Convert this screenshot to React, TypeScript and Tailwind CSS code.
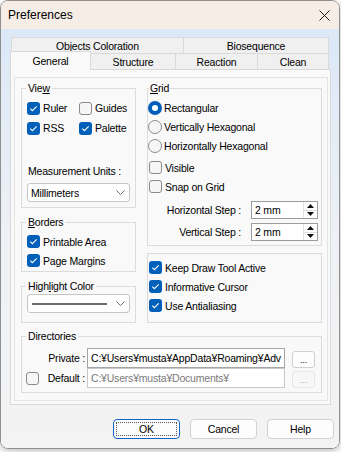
import React from "react";

const Check = ({ checked }: { checked: boolean }) => (
  <svg width="13" height="13" viewBox="0 0 13 13" className="shrink-0">
    {checked ? (
      <>
        <rect x="0" y="0" width="13" height="13" rx="3" fill="#005fb8" />
        <path d="M3.3 6.7 L5.4 8.7 L9.7 4.4" fill="none" stroke="#fff" strokeWidth="1.1" />
      </>
    ) : (
      <rect x="0.5" y="0.5" width="12" height="12" rx="2.5" fill="#f6f6f6" stroke="#8a8a8a" />
    )}
  </svg>
);

const Radio = ({ checked }: { checked: boolean }) => (
  <svg width="14" height="14" viewBox="0 0 14 14" className="shrink-0">
    {checked ? (
      <>
        <circle cx="7" cy="7" r="7" fill="#005fb8" />
        <circle cx="7" cy="7" r="3" fill="#fff" />
      </>
    ) : (
      <circle cx="7" cy="7" r="6.5" fill="#f6f6f6" stroke="#8a8a8a" />
    )}
  </svg>
);

const Chevron = () => (
  <svg width="9" height="5" viewBox="0 0 9 5" className="shrink-0">
    <path d="M0.5 0.5 L4.5 4.5 L8.5 0.5" fill="none" stroke="#6b6b6b" strokeWidth="1" />
  </svg>
);

const CheckRow = ({ checked, children }: { checked: boolean; children: React.ReactNode }) => (
  <div className="flex items-center h-[19px] gap-[3px] whitespace-nowrap">
    <Check checked={checked} />
    <span>{children}</span>
  </div>
);

const RadioRow = ({ checked, children }: { checked: boolean; children: React.ReactNode }) => (
  <div className="flex items-center h-[19px] gap-[2px] whitespace-nowrap">
    <Radio checked={checked} />
    <span>{children}</span>
  </div>
);

const Spinner = ({ value }: { value: string }) => (
  <div className="w-[67px] h-[18px] border border-[#9c9c9c] bg-white flex">
    <div className="flex-1 pl-[3px] flex items-center">{value}</div>
    <div className="w-[14px] flex flex-col border-l border-[#e2e2e2]">
      <div className="flex-1 flex items-center justify-center border-b border-[#e2e2e2]">
        <svg width="7" height="4" viewBox="0 0 7 4"><path d="M0 4 L3.5 0 L7 4 Z" fill="#111" /></svg>
      </div>
      <div className="flex-1 flex items-center justify-center">
        <svg width="7" height="4" viewBox="0 0 7 4"><path d="M0 0 L3.5 4 L7 0 Z" fill="#111" /></svg>
      </div>
    </div>
  </div>
);

export default function App() {
  return (
    <div className="w-[341px] h-[452px] bg-white font-['Liberation_Sans',Arial,sans-serif] text-[10.5px] tracking-[-0.2px] text-black leading-[12px]">
      <div className="w-[340px] h-[449px] rounded-[8px] border border-[#8f8f8f] overflow-hidden flex flex-col shadow-[0_2px_6px_rgba(0,0,0,0.25)]">
        {/* Title bar */}
        <div className="h-[28px] shrink-0 bg-[#f6ede7] flex items-center justify-between pl-[7px] pr-[9px]">
          <span className="text-[12px] tracking-normal">Preferences</span>
          <svg width="11" height="11" viewBox="0 0 11 11">
            <path d="M0.5 0.5 L10.5 10.5 M10.5 0.5 L0.5 10.5" stroke="#1a1a1a" strokeWidth="1" />
          </svg>
        </div>

        {/* Body */}
        <div className="flex-1 flex flex-col bg-gradient-to-b from-[#dce8f7] via-[#eef1f5] to-[#f3f3f3]">
          <div className="ml-[9px] mt-[8px] w-[321px]">
            {/* Tab row 1 */}
            <div className="flex h-[16px] ml-[1px] w-[318px]">
              <div className="w-[173px] border-l border-t border-r border-[#d9d9d9] bg-[#f0f0f0] flex items-center justify-center">
                Objects Coloration
              </div>
              <div className="flex-1 border-t border-r border-[#d9d9d9] bg-[#f0f0f0] flex items-center justify-center">
                Biosequence
              </div>
            </div>
            {/* Tab row 2 */}
            <div className="flex h-[16px] items-end">
              <div className="w-[81px] h-[19px] mb-[-1px] relative z-10 bg-[#f9f9f9] border-l border-t border-r border-[#d9d9d9] flex items-center justify-center pb-[1px]">
                General
              </div>
              <div className="w-[85px] h-[16px] border-t border-r border-[#d9d9d9] bg-[#f0f0f0] flex items-center justify-center">
                Structure
              </div>
              <div className="w-[82px] h-[16px] border-t border-r border-[#d9d9d9] bg-[#f0f0f0] flex items-center justify-center">
                Reaction
              </div>
              <div className="w-[71px] h-[16px] border-t border-r border-[#d9d9d9] bg-[#f0f0f0] flex items-center justify-center">
                Clean
              </div>
            </div>
            {/* Panel */}
            <div className="h-[336px] border border-[#d9d9d9] bg-[#f9f9f9] pt-[7px] pl-[3px]">
              <div className="w-[314px] h-[324px] border border-[#e4e4e4] pl-[6px] pt-[4px]">
                <div className="flex gap-[11px]">
                  {/* Left column */}
                  <div className="w-[115px] flex flex-col">
                    <fieldset className="h-[126px] border border-[#dcdcdc]">
                      <legend className="ml-[4px] px-[2px] leading-[12px]">
                        Vie<u>w</u>
                      </legend>
                      <div className="grid grid-cols-[52px_1fr] mt-[4px] pl-[5px]">
                        <div className="h-[20px] flex items-center"><CheckRow checked>Ruler</CheckRow></div>
                        <div className="h-[20px] flex items-center"><CheckRow checked={false}>Guides</CheckRow></div>
                        <div className="h-[20px] flex items-center"><CheckRow checked>RSS</CheckRow></div>
                        <div className="h-[20px] flex items-center"><CheckRow checked>Palette</CheckRow></div>
                      </div>
                      <div className="mt-[27px] pl-[6px] whitespace-nowrap">Measurement Units :</div>
                      <div className="mt-[6px] ml-[5px] w-[103px] h-[19px] flex items-center justify-between border border-[#c6c6c6] rounded-[3px] bg-white pl-[3px] pr-[4px]">
                        <span>Millimeters</span>
                        <Chevron />
                      </div>
                    </fieldset>

                    <fieldset className="mt-[8px] h-[56px] border border-[#dcdcdc]">
                      <legend className="ml-[4px] px-[2px] leading-[12px]">
                        <u>B</u>orders
                      </legend>
                      <div className="mt-[4px] pl-[5px]">
                        <CheckRow checked>Printable Area</CheckRow>
                        <CheckRow checked>Page Margins</CheckRow>
                      </div>
                    </fieldset>

                    <fieldset className="mt-[8px] h-[43px] border border-[#dcdcdc]">
                      <legend className="ml-[4px] px-[2px] leading-[12px]">
                        High<u>l</u>ight Color
                      </legend>
                      <div className="mt-[2px] ml-[5px] w-[103px] h-[19px] flex items-center justify-between border border-[#c6c6c6] rounded-[3px] bg-white pl-[4px] pr-[4px]">
                        <div className="w-[75px] h-[2px] bg-[#6d6d6d]" />
                        <Chevron />
                      </div>
                    </fieldset>
                  </div>

                  {/* Right column */}
                  <div className="w-[175px] flex flex-col">
                    <fieldset className="h-[164px] border border-[#dcdcdc]">
                      <legend className="ml-[1px] px-[1px] leading-[12px]">
                        <u>G</u>rid
                      </legend>
                      <div className="mt-[4px] pl-[0px]">
                        <RadioRow checked>Rectangular</RadioRow>
                        <RadioRow checked={false}>Vertically Hexagonal</RadioRow>
                        <RadioRow checked={false}>Horizontally Hexagonal</RadioRow>
                        <div className="mt-[3px] pl-[1px]">
                          <CheckRow checked={false}>Visible</CheckRow>
                          <CheckRow checked={false}>Snap on Grid</CheckRow>
                        </div>
                        <div className="mt-[5px] h-[18px] flex items-center justify-end gap-[10px] pr-[3px]">
                          <span>Horizontal Step :</span>
                          <Spinner value="2 mm" />
                        </div>
                        <div className="mt-[4px] h-[18px] flex items-center justify-end gap-[10px] pr-[3px]">
                          <span>Vertical Step :</span>
                          <Spinner value="2 mm" />
                        </div>
                      </div>
                    </fieldset>

                    <div className="mt-[7px] h-[70px] border border-[#dcdcdc] pt-[4px] pl-[1px]">
                      <CheckRow checked>Keep Draw Tool Active</CheckRow>
                      <CheckRow checked>Informative Cursor</CheckRow>
                      <CheckRow checked>Use Antialiasing</CheckRow>
                    </div>
                  </div>
                </div>

                {/* Directories */}
                <fieldset className="mt-[7px] w-[301px] h-[63px] border border-[#dcdcdc]">
                  <legend className="ml-[4px] px-[2px] leading-[12px]">Directories</legend>
                  <div className="mt-[6px] pl-[4px] flex flex-col">
                    <div className="flex items-end h-[20px]">
                      <div className="w-[13px] shrink-0" />
                      <span className="w-[46px] text-right self-center whitespace-nowrap">Private :</span>
                      <div className="ml-[2px] w-[198px] h-[20px] border border-[#a5a5a5] bg-white pl-[3px] flex items-center overflow-hidden whitespace-nowrap">
                        C:¥Users¥musta¥AppData¥Roaming¥Adv
                      </div>
                      <div className="ml-[7px] w-[23px] h-[17px] border border-[#cfcfcf] rounded-[3px] bg-[#fdfdfd] flex items-center justify-center text-[9px]">
                        ...
                      </div>
                    </div>
                    <div className="flex items-end h-[20px]">
                      <div className="w-[13px] shrink-0 self-center">
                        <Check checked={false} />
                      </div>
                      <span className="w-[46px] text-right self-center whitespace-nowrap">Default :</span>
                      <div className="ml-[2px] w-[198px] h-[20px] border border-[#c8c8c8] bg-white pl-[3px] flex items-center overflow-hidden whitespace-nowrap text-[#7a7a7a]">
                        C:¥Users¥musta¥Documents¥
                      </div>
                      <div className="ml-[7px] w-[23px] h-[17px] border border-[#e6e6e6] rounded-[3px] bg-[#f7f7f7] flex items-center justify-center text-[9px] text-[#a8a8a8]">
                        ...
                      </div>
                    </div>
                  </div>
                </fieldset>
              </div>
            </div>
          </div>

          {/* Buttons */}
          <div className="flex justify-end gap-[10px] mt-[14px] pr-[5px]">
            <div className="w-[67px] h-[20px] rounded-[4px] border border-[#0a64c8] p-[2px] bg-[#fdfdfd]">
              <div className="w-full h-full border border-dotted border-[#555] flex items-center justify-center">OK</div>
            </div>
            <div className="w-[67px] h-[20px] rounded-[4px] border border-[#d1d1d1] bg-[#fdfdfd] flex items-center justify-center">
              Cancel
            </div>
            <div className="w-[67px] h-[20px] rounded-[4px] border border-[#d1d1d1] bg-[#fdfdfd] flex items-center justify-center">
              Help
            </div>
          </div>
        </div>
      </div>
    </div>
  );
}
